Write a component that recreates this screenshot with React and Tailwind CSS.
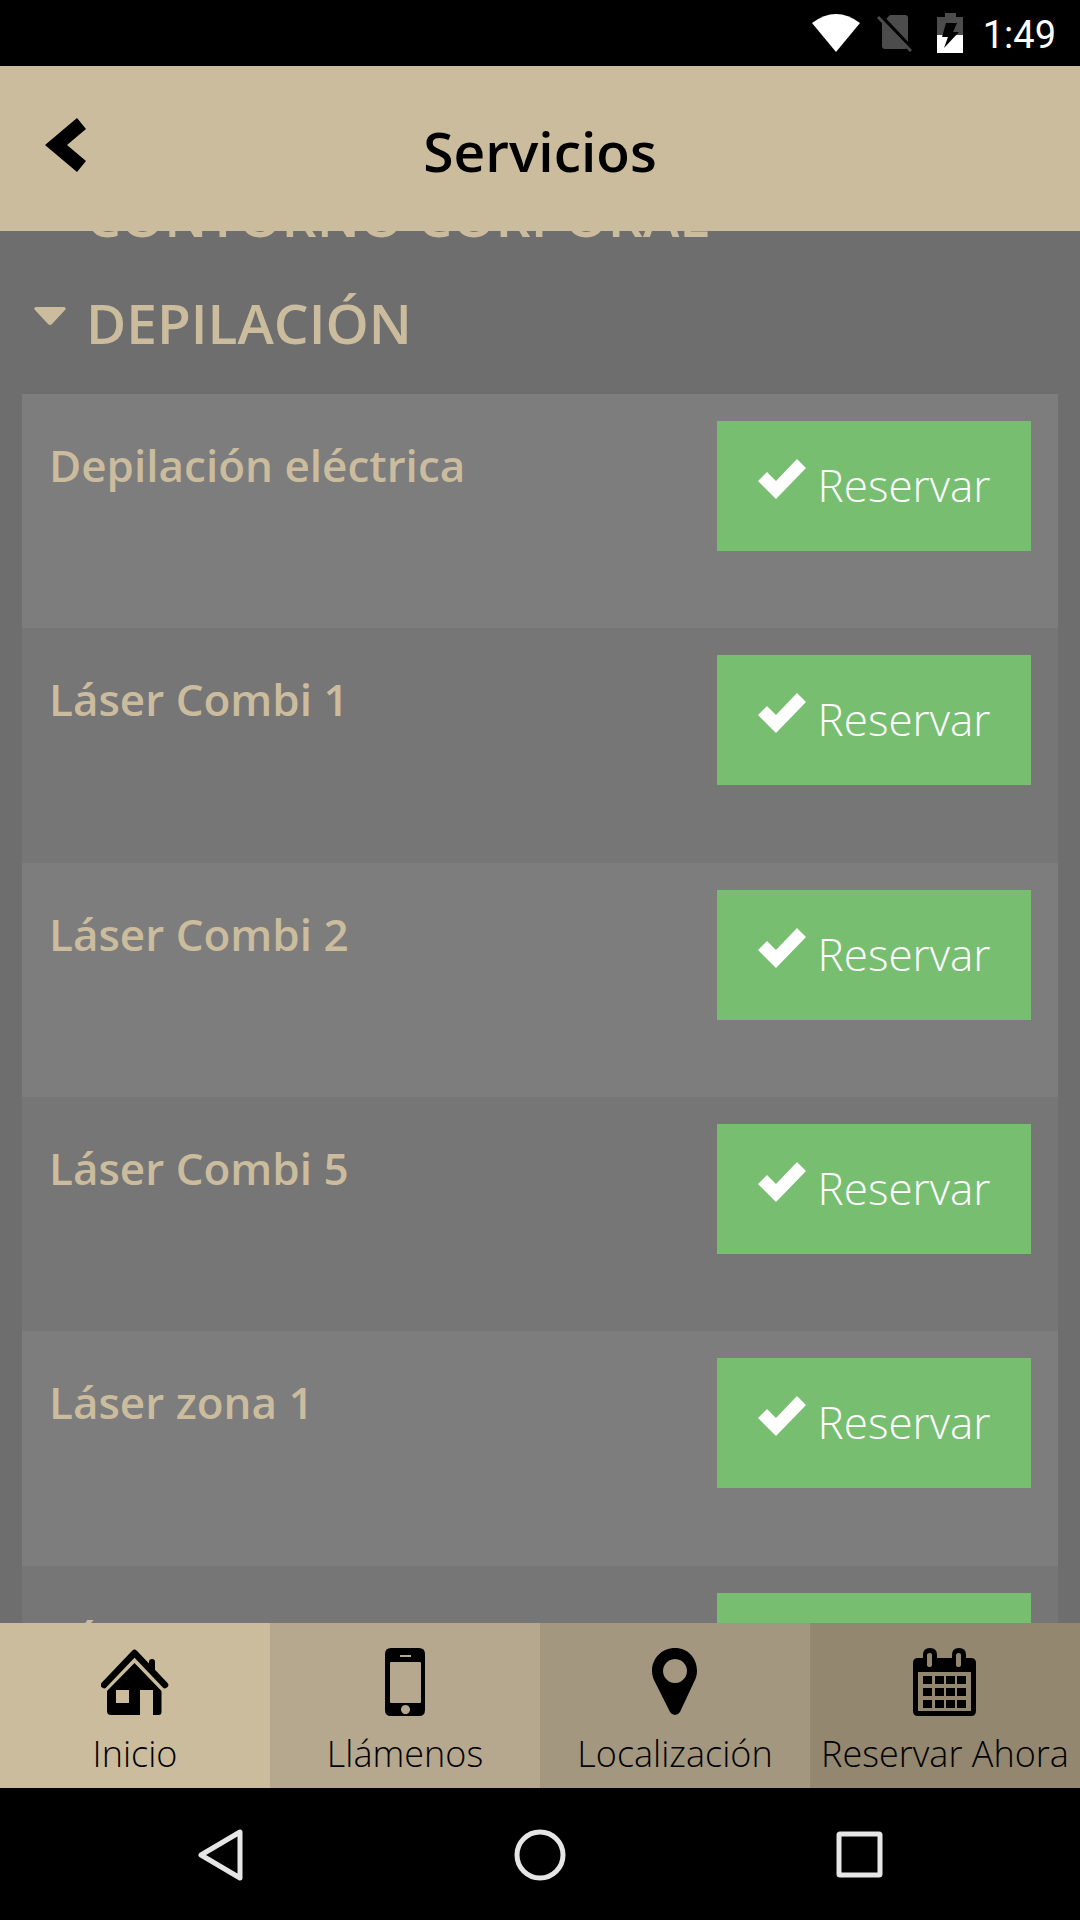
import React, { useState } from 'react';

const services = [
  'Depilación eléctrica',
  'Láser Combi 1',
  'Láser Combi 2',
  'Láser Combi 5',
  'Láser zona 1',
  'Láser zona 2',
];

const HomeIcon = () => (
  <svg viewBox="0 0 68 68" className="h-[68px] w-[68px]">
    <path d="M3 37 L33.500 5 L64 37" fill="none" stroke="currentColor" strokeWidth="6.500" strokeLinecap="round" strokeLinejoin="round" />
    <path d="M48 23 V14 Q48 11 51 11 Q54 11 54 14 V26 Z" fill="currentColor" />
    <path
      fillRule="evenodd"
      fill="currentColor"
      d="M33.500 15 L60.500 43 V64 Q60.500 67 57.500 67 H52 V42 H39 V67 H10 Q6 67 6 63 V43 Z M15 42 V55 H28 V42 Z"
    />
  </svg>
);

const PhoneIcon = () => (
  <svg viewBox="0 0 40 68" className="h-[68px] w-[40px]">
    <path
      fillRule="evenodd"
      fill="currentColor"
      d="M6 0 H34 Q40 0 40 6 V62 Q40 68 34 68 H6 Q0 68 0 62 V6 Q0 0 6 0 Z M15 7 V9 H26 V7 Z M6 14 Q5 14 5 15 V54 Q5 55 6 55 H35 Q36 55 36 54 V15 Q36 14 35 14 Z M20.500 57 a4.500 4.500 0 1 0 0.010 0 Z"
    />
  </svg>
);

const PinIcon = () => (
  <svg viewBox="0 0 46 68" className="h-[68px] w-[46px]">
    <path
      fillRule="evenodd"
      fill="currentColor"
      d="M23 0 C36 0 45 10 45 23 C45 27 44 30 42 34 L28 64 Q26 67 23 67 Q20 67 18 64 L3 34 C1 30 0 27 0 23 C0 10 10 0 23 0 Z M23 11 a12 12 0 1 0 0.010 0 Z"
    />
  </svg>
);

const CalendarIcon = () => (
  <svg viewBox="0 0 64 68" className="h-[68px] w-[64px]">
    <path
      fillRule="evenodd"
      fill="currentColor"
      d="M5 10 H10 V7 Q10 0 17 0 Q24 0 24 7 V10 H39 V7 Q39 0 46 0 Q53 0 53 7 V10 H58 Q63 10 63 15 V63 Q63 68 58 68 H5 Q0 68 0 63 V15 Q0 10 5 10 Z M5 24 V63 H58 V24 Z M14 7 V17 Q14 19 17 19 Q19 19 19 17 V7 Q19 5 17 5 Q14 5 14 7 Z M43 7 V17 Q43 19 46 19 Q48 19 48 17 V7 Q48 5 46 5 Q43 5 43 7 Z"
    />
    {[28, 40, 52].map((y) =>
      [10, 22, 33, 44].map((x) => (
        <rect key={`${x}-${y}`} x={x} y={y} width="9" height="8" fill="currentColor" />
      ))
    )}
  </svg>
);

const tabs = [
  { label: 'Inicio', icon: HomeIcon, bg: 'bg-[#cbbc9e]' },
  { label: 'Llámenos', icon: PhoneIcon, bg: 'bg-[#b5a88e]' },
  { label: 'Localización', icon: PinIcon, bg: 'bg-[#a3977f]' },
  { label: 'Reservar Ahora', icon: CalendarIcon, bg: 'bg-[#938770]' },
];

const StatusBar = () => (
  <div className="flex h-[66px] shrink-0 items-center justify-end bg-black pr-6 text-white">
    <svg viewBox="0 0 48 38" className="mr-[17px] h-[38px] w-[48px]">
      <path d="M0 9 Q24 -9 48 9 L24 38 Z" fill="#fff" />
    </svg>
    <svg viewBox="0 0 35 38" className="mr-[25px] h-[38px] w-[35px]">
      <path d="M13 1 H28 Q31 1 31 4 V32 Q31 35 28 35 H8 Q5 35 5 32 V9 Z" fill="#4c4c4c" />
      <path d="M3 1 L35 35" stroke="#000" strokeWidth="4" />
      <path d="M1 3 L34 37" stroke="#4c4c4c" strokeWidth="3" />
    </svg>
    <svg viewBox="0 0 26 40" className="mr-[20px] h-[40px] w-[26px]">
      <path d="M8 0 H19 V4 H26 V22 H0 V4 H8 Z" fill="#4c4c4c" />
      <path d="M0 22 H26 V40 H0 Z" fill="#fff" />
      <path d="M9 10 H20 L16 19 H22 L7 35 L11 24 H5 Z" fill="#000" />
    </svg>
    <span className="pt-[3px] font-[Roboto] text-[38px] leading-none">1:49</span>
  </div>
);

const SectionHeading = ({ title, open, onClick }) => (
  <h2>
    <button
      onClick={onClick}
      className="flex h-[107px] w-full items-center gap-5 px-[34px] text-left text-[55px] leading-none font-semibold text-[#cbbc9e]"
    >
      <svg viewBox="0 0 32 18" className={`mb-[14px] h-[18px] w-[32px] shrink-0 ${open ? '' : '-rotate-90'}`}>
        <path d="M2 0 H30 Q33 1 31 3 L18 17 Q16 19 14 17 L1 3 Q-1 1 2 0 Z" fill="currentColor" />
      </svg>
      {title}
    </button>
  </h2>
);

const ServiceRow = ({ name }) => (
  <li className="flex items-start justify-between px-[27px] pt-[27px] odd:bg-[#7d7d7d] even:bg-[#767676]">
    <h3 className="pt-[14px] text-[44px] leading-[60px] font-semibold text-[#cbbc9e]">{name}</h3>
    <button className="flex h-[130px] w-[314px] items-center justify-center gap-3 bg-[#78be70] pb-[2px] text-[44px] font-light text-white">
      <svg viewBox="0 0 48 40" className="mb-[12px] h-[40px] w-[48px]">
        <path d="M0 22 L9 13 L18 22 L39 0 L48 9 L18 40 Z" fill="currentColor" />
      </svg>
      Reservar
    </button>
  </li>
);

const App = () => {
  const [open, setOpen] = useState(true);

  return (
    <div className="flex h-screen flex-col bg-[#6e6e6e] font-['Open_Sans',sans-serif]">
      <StatusBar />

      <header className="grid h-[165px] shrink-0 grid-cols-[1fr_auto_1fr] items-center bg-[#cbbc9e] px-[45px] text-black">
        <button aria-label="Volver" className="mb-[8px] justify-self-start">
          <svg viewBox="0 0 41 54" className="h-[54px] w-[41px]">
            <path d="M32 0 L41 11 L22 27 L41 43 L32 54 L0 27 Z" fill="currentColor" />
          </svg>
        </button>
        <h1 className="pt-1 text-[55px] leading-none font-semibold">Servicios</h1>
      </header>

      <main className="min-h-0 flex-1 overflow-hidden">
        <div className="-mt-[69px]">
          <SectionHeading title="CONTORNO CORPORAL" open={false} />
          <SectionHeading title="DEPILACIÓN" open={open} onClick={() => setOpen(!open)} />
          {open && (
            <ul className="mx-[22px] mt-[18px] grid h-[1406px] auto-rows-fr">
              {services.map((name) => (
                <ServiceRow key={name} name={name} />
              ))}
            </ul>
          )}
        </div>
      </main>

      <nav className="grid h-[165px] shrink-0 grid-cols-4">
        {tabs.map(({ label, icon: Icon, bg }) => (
          <a key={label} href="#" className={`flex flex-col items-center pt-[25px] text-black ${bg}`}>
            <Icon />
            <span className="mt-[13px] text-[36px] leading-[50px] font-light whitespace-nowrap">{label}</span>
          </a>
        ))}
      </nav>

      <div className="grid h-[132px] shrink-0 grid-cols-3 place-items-center bg-black px-[60px] pt-[2px] text-[#e6e6e6]">
        <button aria-label="Atrás">
          <svg viewBox="0 0 54 54" className="h-[54px] w-[54px]">
            <path d="M47 4 V50 L8 27 Z" fill="none" stroke="currentColor" strokeWidth="5" strokeLinejoin="round" />
          </svg>
        </button>
        <button aria-label="Pantalla principal">
          <svg viewBox="0 0 54 54" className="h-[54px] w-[54px]">
            <circle cx="27" cy="27" r="23" fill="none" stroke="currentColor" strokeWidth="5" />
          </svg>
        </button>
        <button aria-label="Aplicaciones recientes">
          <svg viewBox="0 0 54 54" className="h-[54px] w-[54px]">
            <rect x="6" y="6" width="41" height="41" rx="1" fill="none" stroke="currentColor" strokeWidth="5" />
          </svg>
        </button>
      </div>
    </div>
  );
};

export default App;
